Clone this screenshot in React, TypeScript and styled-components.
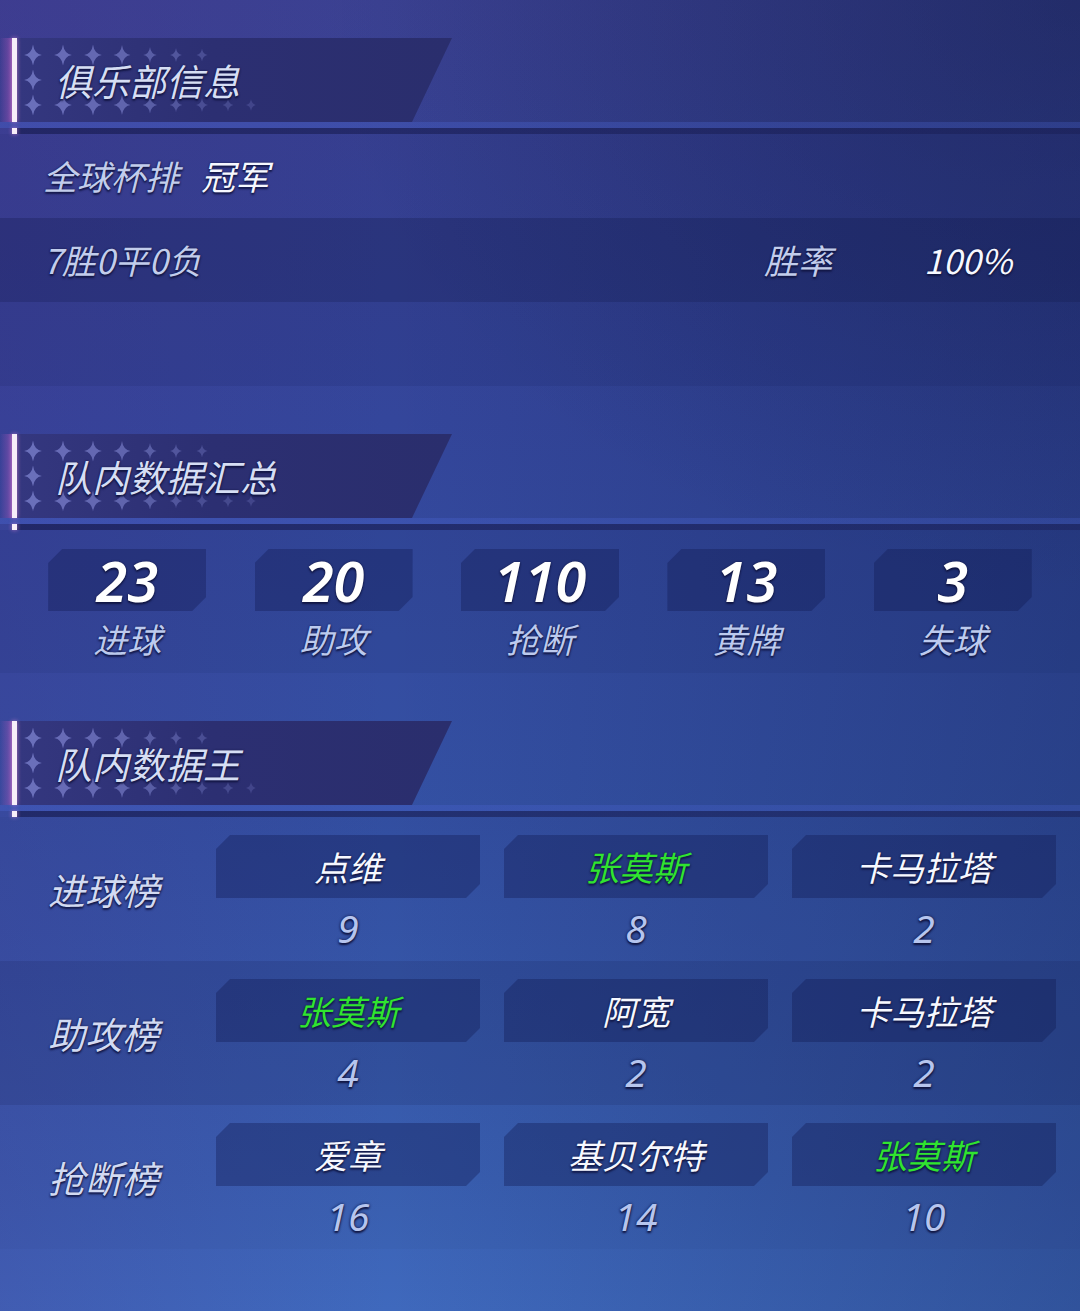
import React from "react";
import styled, { createGlobalStyle } from "styled-components";

const GlobalStyle = createGlobalStyle`
  html, body {
    margin: 0;
    padding: 0;
  }
  body {
    width: 1080px;
    min-height: 1311px;
    background: #3a4a9c;
    font-family: "Noto Sans CJK SC", "Noto Sans", sans-serif;
  }
`;

const GREEN = "#30e430";

const darkShadow =
  "0 2px 2px rgba(14, 18, 60, 0.85), 0 0 2px rgba(14, 18, 60, 0.9)";

type Leader = { name: string; value: number; hot?: boolean };

const stats = [
  { value: "23", label: "进球" },
  { value: "20", label: "助攻" },
  { value: "110", label: "抢断" },
  { value: "13", label: "黄牌" },
  { value: "3", label: "失球" },
];

const boards: { title: string; leaders: Leader[] }[] = [
  {
    title: "进球榜",
    leaders: [
      { name: "点维", value: 9 },
      { name: "张莫斯", value: 8, hot: true },
      { name: "卡马拉塔", value: 2 },
    ],
  },
  {
    title: "助攻榜",
    leaders: [
      { name: "张莫斯", value: 4, hot: true },
      { name: "阿宽", value: 2 },
      { name: "卡马拉塔", value: 2 },
    ],
  },
  {
    title: "抢断榜",
    leaders: [
      { name: "爱章", value: 16 },
      { name: "基贝尔特", value: 14 },
      { name: "张莫斯", value: 10, hot: true },
    ],
  },
];

// sparkle rows behind the section titles: [x, half height, opacity]
const starRows: { y: number; items: [number, number, number][] }[] = [
  {
    y: 17,
    items: [
      [16, 10.5, 0.6],
      [46, 10.5, 0.57],
      [76, 10.5, 0.54],
      [105, 10, 0.5],
      [133, 8, 0.44],
      [159, 7, 0.37],
      [185, 6.5, 0.3],
    ],
  },
  { y: 42, items: [[16, 10.5, 0.6]] },
  {
    y: 67,
    items: [
      [16, 10.5, 0.6],
      [46, 10.5, 0.57],
      [76, 10.5, 0.54],
      [105, 10, 0.5],
      [133, 8.5, 0.44],
      [159, 7.5, 0.37],
      [185, 7, 0.3],
      [211, 6.5, 0.26],
      [234, 6, 0.22],
    ],
  },
];

const starPath = (cx: number, cy: number, h: number) => {
  const w = h * 0.85;
  const k = w * 0.14;
  return `M${cx},${cy - h} Q${cx + k},${cy - k} ${cx + w},${cy} Q${cx + k},${cy + k} ${cx},${cy + h} Q${cx - k},${cy + k} ${cx - w},${cy} Q${cx - k},${cy - k} ${cx},${cy - h}Z`;
};

const Sparkles = () => (
  <StarLayer width="260" height="84" viewBox="0 0 260 84">
    {starRows.map((row) =>
      row.items.map(([x, h, o]) => (
        <path
          key={`${row.y}-${x}`}
          d={starPath(x, row.y, h)}
          fill="#9096e2"
          opacity={o}
        />
      ))
    )}
  </StarLayer>
);

const SectionHeader = ({ title }: { title: string }) => (
  <HeaderWrap>
    <Glow />
    <Bar $row={1} />
    <Panel>
      <Sparkles />
      <Title>{title}</Title>
    </Panel>
    <LightBand />
    <Bar $row={3} />
    <DarkStrip />
  </HeaderWrap>
);

const App = () => (
  <Page>
    <GlobalStyle />

    <SectionHeader title="俱乐部信息" />
    <InfoRow $tone="light">
      <Muted>全球杯排</Muted>
      <Bright style={{ marginLeft: 22 }}>冠军</Bright>
    </InfoRow>
    <InfoRow $tone="dark">
      <Muted>7胜0平0负</Muted>
      <Muted style={{ marginLeft: "auto" }}>胜率</Muted>
      <Bright style={{ marginLeft: 92 }}>100%</Bright>
    </InfoRow>
    <InfoRow $tone="mid" />
    <Spacer />

    <SectionHeader title="队内数据汇总" />
    <StatsRow>
      {stats.map((s) => (
        <StatCell key={s.label}>
          <StatCard>{s.value}</StatCard>
          <StatLabel>{s.label}</StatLabel>
        </StatCell>
      ))}
    </StatsRow>
    <Spacer />

    <SectionHeader title="队内数据王" />
    {boards.map((b, i) => (
      <BoardRow key={b.title} $dark={i % 2 === 1}>
        <BoardTitle>{b.title}</BoardTitle>
        {b.leaders.map((l) => (
          <LeaderCell key={l.name}>
            <NameCard $hot={!!l.hot}>{l.name}</NameCard>
            <LeaderValue>{l.value}</LeaderValue>
          </LeaderCell>
        ))}
      </BoardRow>
    ))}
  </Page>
);

const Page = styled.div`
  width: 1080px;
  min-height: 1311px;
  box-sizing: border-box;
  padding-top: 38px;
  overflow: hidden;
  font-style: italic;
  background: radial-gradient(
      ellipse 70% 45% at 100% 0%,
      rgba(14, 26, 70, 0.35) 0%,
      rgba(14, 26, 70, 0) 100%
    ),
    linear-gradient(
      90deg,
      rgba(72, 42, 135, 0.2) 0%,
      rgba(0, 0, 0, 0) 36%,
      rgba(12, 26, 70, 0.28) 100%
    ),
    linear-gradient(
      180deg,
      #3b4192 0%,
      #34469b 32%,
      #3451a4 62%,
      #3b61b4 90%,
      #3f69bd 100%
    );
`;

const HeaderWrap = styled.div`
  display: grid;
  grid-template-columns: 12px 5px 1fr;
  grid-template-rows: 84px 6px 6px;
`;

const Glow = styled.div`
  grid-column: 1;
  grid-row: 1;
  background: linear-gradient(
    90deg,
    rgba(140, 70, 170, 0) 0%,
    rgba(190, 90, 190, 0.45) 100%
  );
`;

const Bar = styled.div<{ $row: number }>`
  grid-column: 2;
  grid-row: ${(p) => p.$row};
  background: #f7eef9;
  box-shadow: 0 0 4px rgba(235, 140, 220, 0.7);
  position: relative;
  z-index: 1;
`;

const Panel = styled.div`
  grid-column: 3;
  grid-row: 1;
  position: relative;
  width: 435px;
  display: flex;
  align-items: center;
  padding-left: 38px;
  box-sizing: border-box;
  clip-path: polygon(0 0, 100% 0, calc(100% - 40px) 100%, 0 100%);
  background: linear-gradient(90deg, #34377f 0%, #2c2f72 45%, #2a2e6d 100%);
`;

const StarLayer = styled.svg`
  position: absolute;
  left: 0;
  top: 0;
`;

const Title = styled.div`
  position: relative;
  font-size: 37px;
  line-height: 1;
  color: #d6def4;
  text-shadow: ${darkShadow};
`;

const LightBand = styled.div`
  grid-column: 1 / 4;
  grid-row: 2;
  background: linear-gradient(
    90deg,
    rgba(70, 95, 200, 0.45) 0%,
    rgba(70, 95, 200, 0.3) 100%
  );
`;

const DarkStrip = styled.div`
  grid-column: 3;
  grid-row: 3;
  background: linear-gradient(
    90deg,
    rgba(24, 28, 82, 0.7) 0%,
    rgba(24, 28, 82, 0.5) 100%
  );
`;

const toneBg = {
  light: "rgba(20, 26, 84, 0.08)",
  dark: "rgba(16, 22, 72, 0.32)",
  mid: "rgba(20, 26, 84, 0.12)",
};

const InfoRow = styled.div<{ $tone: keyof typeof toneBg }>`
  height: 84px;
  display: flex;
  align-items: center;
  padding: 0 68px 0 43px;
  background: ${(p) => toneBg[p.$tone]};
  font-size: 34px;
  line-height: 1;
`;

const Muted = styled.span`
  color: #c2cdec;
  text-shadow: ${darkShadow};
`;

const Bright = styled.span`
  color: #f6f8ff;
  text-shadow: ${darkShadow};
`;

const Spacer = styled.div`
  height: 48px;
`;

const StatsRow = styled.div`
  height: 143px;
  box-sizing: border-box;
  padding: 19px 24px 0;
  display: grid;
  grid-template-columns: repeat(5, 1fr);
  background: rgba(16, 22, 72, 0.08);
`;

const StatCell = styled.div`
  display: flex;
  flex-direction: column;
  align-items: center;
`;

const chamfer = `clip-path: polygon(14px 0, 100% 0, 100% calc(100% - 14px), calc(100% - 14px) 100%, 0 100%, 0 14px);`;

const StatCard = styled.div`
  width: 158px;
  height: 62px;
  ${chamfer}
  background: rgba(18, 26, 80, 0.36);
  display: flex;
  align-items: center;
  justify-content: center;
  font-family: "Noto Sans", "Noto Sans CJK SC", sans-serif;
  font-size: 56px;
  font-weight: 600;
  line-height: 1;
  color: #ffffff;
  text-shadow: ${darkShadow};
`;

const StatLabel = styled.div`
  margin-top: 9px;
  font-size: 34px;
  line-height: 1.1;
  color: #bccaee;
  text-shadow: ${darkShadow};
`;

const BoardRow = styled.div<{ $dark: boolean }>`
  height: 144px;
  display: grid;
  grid-template-columns: 192px repeat(3, 264px);
  column-gap: 24px;
  background: ${(p) =>
    p.$dark ? "rgba(16, 22, 72, 0.18)" : "rgba(16, 22, 72, 0.04)"};
`;

const BoardTitle = styled.div`
  display: flex;
  align-items: center;
  padding-left: 48px;
  white-space: nowrap;
  font-size: 37px;
  line-height: 1;
  color: #d2daf2;
  text-shadow: ${darkShadow};
`;

const LeaderCell = styled.div`
  display: flex;
  flex-direction: column;
  padding-top: 18px;
`;

const NameCard = styled.div<{ $hot: boolean }>`
  height: 63px;
  ${chamfer}
  background: rgba(18, 26, 80, 0.36);
  display: flex;
  align-items: center;
  justify-content: center;
  font-size: 34px;
  line-height: 1;
  color: ${(p) => (p.$hot ? GREEN : "#f6f8ff")};
  text-shadow: ${darkShadow};
`;

const LeaderValue = styled.div`
  height: 58px;
  display: flex;
  align-items: center;
  justify-content: center;
  font-family: "Noto Sans", "Noto Sans CJK SC", sans-serif;
  font-size: 39px;
  line-height: 1;
  color: #b6c5ee;
  text-shadow: 0 2px 2px rgba(14, 18, 60, 0.9), 0 0 3px rgba(14, 18, 60, 0.95);
`;

export default App;
